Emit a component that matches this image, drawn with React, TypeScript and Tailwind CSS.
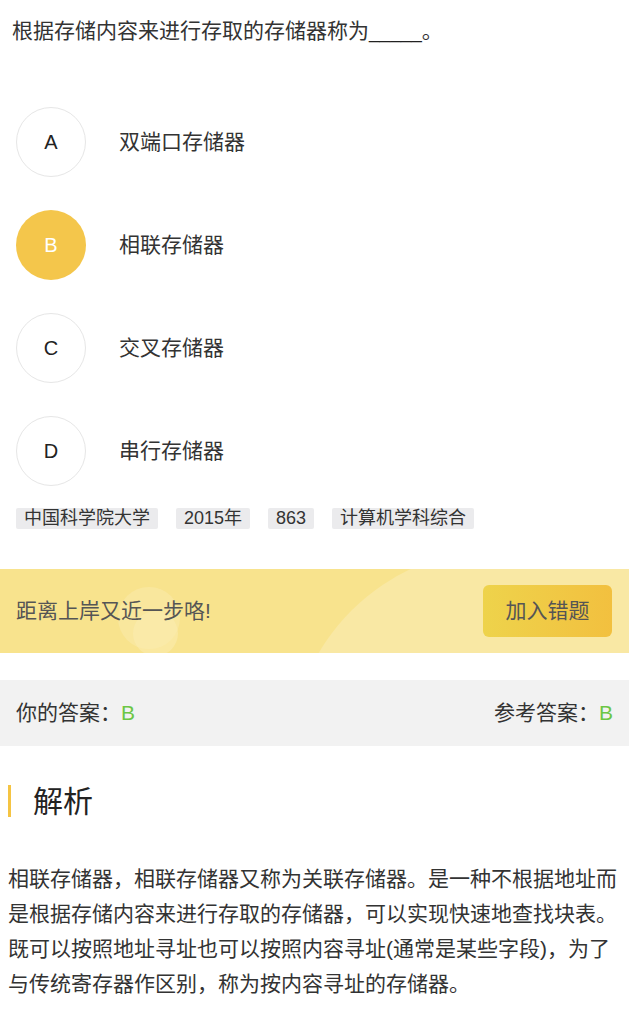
const font = { fontFamily: '"Liberation Sans", "Noto Sans CJK SC", sans-serif' };

const options = [
  { key: 'A', text: '双端口存储器' },
  { key: 'B', text: '相联存储器' },
  { key: 'C', text: '交叉存储器' },
  { key: 'D', text: '串行存储器' },
];

const tags = ['中国科学院大学', '2015年', '863', '计算机学科综合'];

const picked = 'B';

export default function App() {
  return (
    <div style={font} className="w-[629px] min-h-[1024px] bg-white text-[#333]">
      <p className="pl-3 pt-4 text-[21px] leading-[30px]">
        根据存储内容来进行存取的存储器称为<span className="text-[19px] text-[#222]">_____</span>。
      </p>

      <ul className="mt-[60px] flex flex-col gap-[33px] pl-4">
        {options.map((o) => {
          const on = o.key === picked;
          return (
            <li key={o.key} className="flex items-center">
              <span
                className={
                  on
                    ? 'flex h-[70px] w-[70px] items-center justify-center rounded-full bg-[#f4c64b] text-[20px] text-white'
                    : 'flex h-[70px] w-[70px] items-center justify-center rounded-full border border-[#e6e6e6] text-[20px] text-[#222]'
                }
              >
                {o.key}
              </span>
              <span className="ml-[33px] text-[21px]">{o.text}</span>
            </li>
          );
        })}
      </ul>

      <div className="mt-[22px] flex gap-[18px] pl-4">
        {tags.map((t) => (
          <span key={t} className="rounded-[2px] bg-[#ebebed] px-2 text-[18px] leading-[21px] text-[#333]">
            {t}
          </span>
        ))}
      </div>

      <div className="relative mt-10 flex h-[84px] items-center justify-between overflow-hidden bg-[#f8e38d] pl-4 pr-[17px]">
        <div className="absolute left-[290px] top-[-20px] h-[420px] w-[700px] rounded-full bg-[#f9e8a4]" />
        <div className="absolute left-[118px] top-[18px] h-[62px] w-[62px] rounded-full bg-[#faeaa8]/60" />
        <div className="absolute left-[133px] top-[42px] h-[45px] w-[45px] rounded-full bg-[#fbedb3]/50" />
        <span className="relative text-[21px] text-[#555]">距离上岸又近一步咯!</span>
        <button className="relative h-[52px] w-[129px] rounded-[6px] bg-gradient-to-r from-[#eed34b] to-[#f2c03f] text-[21px] text-[#555]">
          加入错题
        </button>
      </div>

      <div className="mt-[27px] flex h-[66px] items-center justify-between bg-[#f2f2f2] px-4 text-[21px]">
        <span>
          你的答案：<span className="text-[#6cc644]">B</span>
        </span>
        <span>
          参考答案：<span className="text-[#6cc644]">B</span>
        </span>
      </div>

      <div className="mt-[39px] flex h-8 items-center pl-2">
        <span className="h-8 w-[3px] bg-[#f5c443]" />
        <h2 className="ml-[22px] text-[30px] text-[#222]">解析</h2>
      </div>

      <p className="mt-[44px] px-2 text-[21px] leading-[35px] text-[#333]">
        相联存储器，相联存储器又称为关联存储器。是一种不根据地址而是根据存储内容来进行存取的存储器，可以实现快速地查找块表。既可以按照地址寻址也可以按照内容寻址(通常是某些字段)，为了与传统寄存器作区别，称为按内容寻址的存储器。
      </p>
    </div>
  );
}
